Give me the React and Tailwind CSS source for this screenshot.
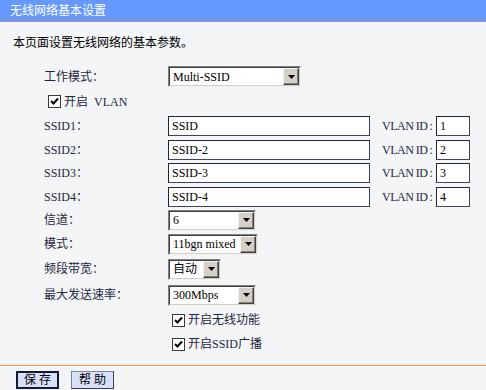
import React from "react";

const Arrow = () => (
  <div className="flex h-[17px] w-[16px] shrink-0 items-center justify-center border border-t-[#f4f4f4] border-l-[#f4f4f4] border-b-[#404040] border-r-[#404040] bg-[#d4d0c8] shadow-[inset_-1px_-1px_0_#808080]">
    <svg width="7" height="4" viewBox="0 0 7 4">
      <polygon points="0,0 7,0 3.5,4" fill="#000" />
    </svg>
  </div>
);

const Select = ({ w, value }) => (
  <div
    className="flex h-[21px] items-center justify-between border border-t-[#808080] border-l-[#808080] border-b-[#f0f0f0] border-r-[#f0f0f0] bg-white"
    style={{ width: w }}
  >
    <div className="flex h-full flex-1 items-center justify-between border border-t-[#404040] border-l-[#404040] border-b-[#d4d0c8] border-r-[#d4d0c8]">
      <span className="whitespace-nowrap pl-[3px] leading-none text-black">{value}</span>
      <Arrow />
    </div>
  </div>
);

const Input = ({ w, value }) => (
  <div
    className="flex h-[20px] shrink-0 items-center border border-[#3b4556] border-t-[#1f2633] border-l-[#1f2633] bg-white pl-[3px] leading-none text-black"
    style={{ width: w }}
  >
    {value}
  </div>
);

const Check = () => (
  <div className="flex h-[13px] w-[13px] shrink-0 items-center justify-center border border-[#3a3a3a] bg-white">
    <svg width="9" height="9" viewBox="0 0 9 9">
      <polyline points="1,4 3.5,6.5 8,1.5" fill="none" stroke="#000" strokeWidth="2" />
    </svg>
  </div>
);

const Row = ({ h, label, children }) => (
  <div className="flex items-center" style={{ height: h }}>
    <div className="w-[124px] shrink-0 whitespace-nowrap text-[#1c2742]">{label}</div>
    {children}
  </div>
);

export default function App() {
  const ssids = [
    ["SSID1：", "SSID", "1", 24],
    ["SSID2：", "SSID-2", "2", 23],
    ["SSID3：", "SSID-3", "3", 24],
    ["SSID4：", "SSID-4", "4", 23],
  ];
  return (
    <div className="h-[390px] w-[486px] overflow-hidden bg-[#f4f5f7] font-['Liberation_Serif','Noto_Sans_CJK_SC',serif] text-[12px]">
      <div className="flex h-[22px] items-center border-b-[4px] border-[#7896e4] bg-[#6699ff] pl-[10px] pt-[3px] text-white">
        无线网络基本设置
      </div>
      <div className="flex h-[42px] items-center pl-[13px] text-black">本页面设置无线网络的基本参数。</div>
      <div className="pl-[44px]">
        <Row h={25} label="工作模式：">
          <Select w={133} value="Multi-SSID" />
        </Row>
        <div className="flex h-[25px] items-center gap-[3px] pl-[4px] text-[#1c2742]">
          <Check />
          <span>开启</span>
          <span className="ml-[3px]">VLAN</span>
        </div>
        {ssids.map(([l, v, id, h]) => (
          <Row key={l} h={h} label={l}>
            <Input w={202} value={v} />
            <div className="ml-[12px] flex w-[54px] shrink-0 items-center whitespace-nowrap text-[#1c2742]">
              <span className="tracking-[-0.5px]">VLAN ID</span>
              <span className="ml-[2px]">:</span>
            </div>
            <Input w={34} value={id} />
          </Row>
        ))}
        <Row h={24} label="信道：">
          <Select w={88} value="6" />
        </Row>
        <Row h={24} label="模式：">
          <Select w={90} value="11bgn mixed" />
        </Row>
        <Row h={26} label="频段带宽：">
          <Select w={53} value="自动" />
        </Row>
        <Row h={26} label="最大发送速率：">
          <Select w={88} value="300Mbps" />
        </Row>
        <div className="flex h-[24px] items-center gap-[3px] pl-[128px] text-[#1c2742]">
          <Check />
          <span>开启无线功能</span>
        </div>
        <div className="flex h-[24px] items-center gap-[3px] pl-[128px] text-[#1c2742]">
          <Check />
          <span>开启SSID广播</span>
        </div>
      </div>
      <div className="mt-[8px] h-[1px] bg-[#fde4c8]" />
      <div className="h-[1px] bg-[#dfa078]" />
      <div className="flex gap-[12px] pl-[16px] pt-[5px]">
        <button className="flex h-[18px] w-[43px] items-center justify-center border-2 border-[#111a33] bg-[#d9def9] leading-none text-black">
          保 存
        </button>
        <button className="flex h-[18px] w-[43px] items-center justify-center border border-[#7a82a8] border-b-[#3a3f55] border-r-[#3a3f55] bg-[#d9def9] leading-none text-black">
          帮 助
        </button>
      </div>
    </div>
  );
}
